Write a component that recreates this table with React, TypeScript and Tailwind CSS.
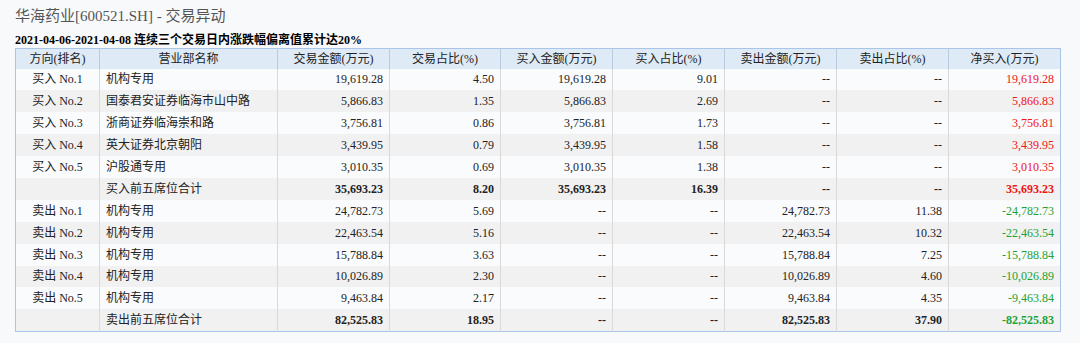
import React from 'react'

type Row = {
  dir: string
  name: string
  amt: string
  pct: string
  buy: string
  buyPct: string
  sell: string
  sellPct: string
  net: string
  total?: boolean
  up: boolean
}

const rows: Row[] = [
  { dir: '买入 No.1', name: '机构专用', amt: '19,619.28', pct: '4.50', buy: '19,619.28', buyPct: '9.01', sell: '--', sellPct: '--', net: '19,619.28', up: true },
  { dir: '买入 No.2', name: '国泰君安证券临海巿山中路', amt: '5,866.83', pct: '1.35', buy: '5,866.83', buyPct: '2.69', sell: '--', sellPct: '--', net: '5,866.83', up: true },
  { dir: '买入 No.3', name: '浙商证券临海崇和路', amt: '3,756.81', pct: '0.86', buy: '3,756.81', buyPct: '1.73', sell: '--', sellPct: '--', net: '3,756.81', up: true },
  { dir: '买入 No.4', name: '英大证券北京朝阳', amt: '3,439.95', pct: '0.79', buy: '3,439.95', buyPct: '1.58', sell: '--', sellPct: '--', net: '3,439.95', up: true },
  { dir: '买入 No.5', name: '沪股通专用', amt: '3,010.35', pct: '0.69', buy: '3,010.35', buyPct: '1.38', sell: '--', sellPct: '--', net: '3,010.35', up: true },
  { dir: '', name: '买入前五席位合计', amt: '35,693.23', pct: '8.20', buy: '35,693.23', buyPct: '16.39', sell: '--', sellPct: '--', net: '35,693.23', up: true, total: true },
  { dir: '卖出 No.1', name: '机构专用', amt: '24,782.73', pct: '5.69', buy: '--', buyPct: '--', sell: '24,782.73', sellPct: '11.38', net: '-24,782.73', up: false },
  { dir: '卖出 No.2', name: '机构专用', amt: '22,463.54', pct: '5.16', buy: '--', buyPct: '--', sell: '22,463.54', sellPct: '10.32', net: '-22,463.54', up: false },
  { dir: '卖出 No.3', name: '机构专用', amt: '15,788.84', pct: '3.63', buy: '--', buyPct: '--', sell: '15,788.84', sellPct: '7.25', net: '-15,788.84', up: false },
  { dir: '卖出 No.4', name: '机构专用', amt: '10,026.89', pct: '2.30', buy: '--', buyPct: '--', sell: '10,026.89', sellPct: '4.60', net: '-10,026.89', up: false },
  { dir: '卖出 No.5', name: '机构专用', amt: '9,463.84', pct: '2.17', buy: '--', buyPct: '--', sell: '9,463.84', sellPct: '4.35', net: '-9,463.84', up: false },
  { dir: '', name: '卖出前五席位合计', amt: '82,525.83', pct: '18.95', buy: '--', buyPct: '--', sell: '82,525.83', sellPct: '37.90', net: '-82,525.83', up: false, total: true },
]

const headers = ['方向(排名)', '营业部名称', '交易金额(万元)', '交易占比(%)', '买入金额(万元)', '买入占比(%)', '卖出金额(万元)', '卖出占比(%)', '净买入(万元)']
const widths = ['w-[84px]', 'w-[178px]', 'w-[112px]', 'w-[111px]', 'w-[112px]', 'w-[112px]', 'w-[112px]', 'w-[112px]', 'w-[112px]']

export default function App() {
  return (
    <div className="w-[1080px] h-[343px] bg-[#f8f9fb] pl-[15px] pt-[6px] font-['Liberation_Serif','Noto_Sans_CJK_SC',serif] text-[#222]">
      <div className="h-[20px] text-[15px] leading-[20px] text-[#555]">
        华海药业[600521.SH] - 交易异动
      </div>
      <div className="mt-[7px] text-[12px] leading-[15px] font-bold text-black">
        2021-04-06-2021-04-08 连续三个交易日内涨跌幅偏离值累计达20%
      </div>
      <table className="border-collapse border border-[#a9c5ea] text-[12px] table-fixed">
        <thead>
          <tr className="bg-[#dfeaf7] h-[20px]">
            {headers.map((h, i) => (
              <th key={h} className={`${widths[i]} font-normal text-[#222] text-center border-l border-[#b9cbe0] first:border-l-0 p-0`}>
                {h}
              </th>
            ))}
          </tr>
        </thead>
        <tbody>
          {rows.map((r, idx) => {
            const color = r.up ? 'text-[#f01414]' : 'text-[#1fa233]'
            const weight = r.total ? 'font-bold' : ''
            return (
              <tr key={idx} className={`h-[21.9px] ${idx % 2 === 0 ? 'bg-[#fafbfc]' : 'bg-[#f1f1f2]'}`}>
                <td className="text-center p-0">{r.dir}</td>
                <td className="text-left pl-[6px] border-l border-[#d9d9d9]">{r.name}</td>
                {[r.amt, r.pct, r.buy, r.buyPct, r.sell, r.sellPct].map((v, i) => (
                  <td key={i} className={`text-right pr-[6px] border-l border-[#d9d9d9] ${weight}`}>{v}</td>
                ))}
                <td className={`text-right pr-[6px] border-l border-[#d9d9d9] ${color} ${weight}`}>{r.net}</td>
              </tr>
            )
          })}
        </tbody>
      </table>
    </div>
  )
}
